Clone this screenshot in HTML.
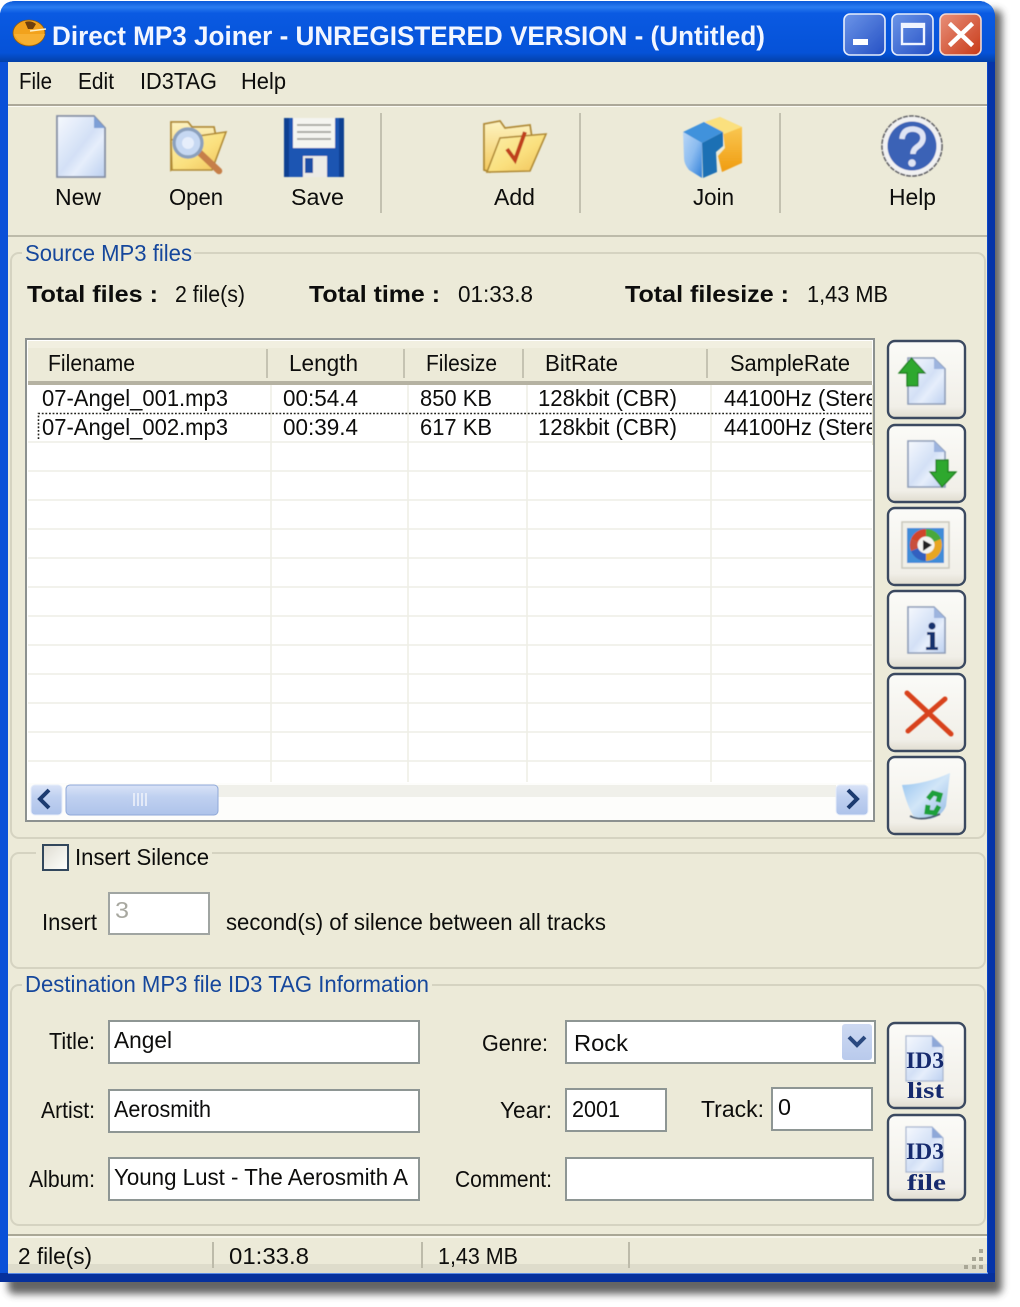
<!DOCTYPE html>
<html><head><meta charset="utf-8"><title>Direct MP3 Joiner</title>
<style>
html,body{margin:0;padding:0;background:#fff;width:1020px;height:1307px;overflow:hidden}
svg{display:block}
text{font-family:"Liberation Sans",sans-serif;font-size:23px;fill:#0c0c08;transform:translateY(-1px)}
.b{font-weight:bold}
.l{fill:#14479c}
</style></head><body>
<svg width="1020" height="1307" viewBox="0 0 1020 1307" xmlns="http://www.w3.org/2000/svg">
<defs>
<filter id="sh" x="-5%" y="-5%" width="110%" height="110%"><feGaussianBlur stdDeviation="4"/></filter>
<filter id="bl" x="-2%" y="-2%" width="104%" height="104%"><feGaussianBlur stdDeviation="0.38"/></filter>
<filter id="bi" x="-10%" y="-10%" width="120%" height="120%"><feGaussianBlur stdDeviation="0.65"/></filter>
<linearGradient id="tb" x1="0" y1="0" x2="0" y2="1"><stop offset="0" stop-color="#0a58d8"/><stop offset=".1" stop-color="#2a7cf0"/><stop offset=".2" stop-color="#0a5ae2"/><stop offset=".85" stop-color="#0552d8"/><stop offset="1" stop-color="#0340a8"/></linearGradient>
<linearGradient id="doc" x1="0" y1="0" x2="1" y2="1"><stop offset="0" stop-color="#f6f9fe"/><stop offset=".5" stop-color="#d3e0f6"/><stop offset=".65" stop-color="#e6eefb"/><stop offset="1" stop-color="#bcd0f0"/></linearGradient>
<linearGradient id="fold" x1="0" y1="0" x2="1" y2="1"><stop offset="0" stop-color="#fbeeaa"/><stop offset=".55" stop-color="#fae07e"/><stop offset="1" stop-color="#f0c058"/></linearGradient>
<linearGradient id="fold2" x1="0" y1="0" x2="0" y2="1"><stop offset="0" stop-color="#fdf3c0"/><stop offset="1" stop-color="#f3c85c"/></linearGradient>
<linearGradient id="btn" x1="0" y1="0" x2="0" y2="1"><stop offset="0" stop-color="#fbfbf8"/><stop offset=".85" stop-color="#f1efe8"/><stop offset="1" stop-color="#e0dccf"/></linearGradient>
<linearGradient id="sb" x1="0" y1="0" x2="0" y2="1"><stop offset="0" stop-color="#d9e3f7"/><stop offset=".4" stop-color="#bfd0f0"/><stop offset="1" stop-color="#aec3ea"/></linearGradient>
<linearGradient id="cb" x1="0" y1="0" x2="0" y2="1"><stop offset="0" stop-color="#cdd9f2"/><stop offset="1" stop-color="#b9caec"/></linearGradient>
<linearGradient id="wb" x1="0" y1="0" x2="1" y2="1"><stop offset="0" stop-color="#6c95e8"/><stop offset="1" stop-color="#2450c4"/></linearGradient>
<linearGradient id="wr" x1="0" y1="0" x2="1" y2="1"><stop offset="0" stop-color="#e8907a"/><stop offset="1" stop-color="#c83a18"/></linearGradient>
<linearGradient id="j1" x1="0" y1="0" x2="1" y2="1"><stop offset="0" stop-color="#b8d6f6"/><stop offset=".5" stop-color="#8cbcf0"/><stop offset="1" stop-color="#2f7fd8"/></linearGradient>
<linearGradient id="j2" x1="0" y1="0" x2="0" y2="1"><stop offset="0" stop-color="#fbd060"/><stop offset="1" stop-color="#f09c10"/></linearGradient>
<linearGradient id="ck" x1="0" y1="0" x2="1" y2="1"><stop offset="0" stop-color="#dedcd2"/><stop offset=".7" stop-color="#f6f6f0"/><stop offset="1" stop-color="#fff"/></linearGradient>
<linearGradient id="rc" x1="0" y1="0" x2="1" y2="1"><stop offset="0" stop-color="#8fc0ee"/><stop offset=".5" stop-color="#d2e6f8"/><stop offset="1" stop-color="#8fb8e4"/></linearGradient>
<g id="d"><path d="M0 0H26L37 11V46H0Z" fill="url(#doc)" stroke="#8f9db8" stroke-width="1.6"/><path d="M26 0L37 11H26Z" fill="#9db4de"/></g>
</defs>

<!-- shadow -->
<rect x="8" y="10" width="994" height="1284" rx="6" fill="#4a4a48" opacity=".85" filter="url(#sh)"/>

<!-- window frame -->
<path d="M0 14Q2 1 16 1H980Q994 3 995 16V1282H0Z" fill="#0a46c8"/>
<path d="M0 14Q2 1 16 1H980Q994 3 995 16V62H0Z" fill="url(#tb)"/>
<rect x="988" y="62" width="7" height="1220" fill="#0634a8"/>
<rect x="0" y="62" width="8" height="1220" fill="#0a50d8"/>
<rect x="0" y="1273" width="995" height="9" fill="#06309c"/>
<rect x="8" y="1272" width="980" height="2" fill="#5a8ae6"/>

<!-- client -->
<rect x="8" y="62" width="979" height="1211" fill="#ecead8"/>

<g filter="url(#bl)">
<!-- app icon -->
<ellipse cx="29" cy="33" rx="16" ry="13" fill="#f2a21c" stroke="#8a5a14" stroke-width=".8"/>
<path d="M14 34Q20 45 30 45Q42 44 45 34Z" fill="#f7b030"/>
<path d="M25 22Q31 20 36 24L33 29H28Z" fill="#6e3f0c"/>
<path d="M30 31L46 29" stroke="#fff0c8" stroke-width="1.4"/>
<text class="b" x="52" y="46" font-size="27" style="font-size:27px;fill:#f2f6ff" textLength="713" lengthAdjust="spacingAndGlyphs">Direct MP3 Joiner - UNREGISTERED VERSION - (Untitled)</text>

<!-- caption buttons -->
<rect x="844" y="14" width="41" height="41" rx="6" fill="url(#wb)" stroke="#e6eefc" stroke-width="1.6"/>
<rect x="853" y="39" width="15" height="6" fill="#fff"/>
<rect x="892" y="14" width="41" height="41" rx="6" fill="url(#wb)" stroke="#e6eefc" stroke-width="1.6"/>
<rect x="902" y="24" width="22" height="20" fill="none" stroke="#f0f4ff" stroke-width="2.4"/><rect x="902" y="24" width="22" height="4" fill="#f0f4ff"/>
<rect x="940" y="14" width="41" height="41" rx="6" fill="url(#wr)" stroke="#f2d8d0" stroke-width="1.6"/>
<path d="M951 25L971 44M971 25L951 44" stroke="#fff" stroke-width="4.4" stroke-linecap="square"/>

<!-- menu -->
<text x="19" y="90" textLength="33" lengthAdjust="spacingAndGlyphs">File</text>
<text x="78" y="90" textLength="36" lengthAdjust="spacingAndGlyphs">Edit</text>
<text x="140" y="90" textLength="77" lengthAdjust="spacingAndGlyphs">ID3TAG</text>
<text x="241" y="90" textLength="45" lengthAdjust="spacingAndGlyphs">Help</text>
<rect x="8" y="104" width="979" height="2" fill="#aca899"/><rect x="8" y="106" width="979" height="1" fill="#fbfaf3"/>

<!-- toolbar icons -->
<g filter="url(#bi)">
<!-- New -->
<path d="M57 116H94L105 128V177H57Z" fill="url(#doc)" stroke="#858fa4" stroke-width="1.8"/>
<path d="M94 116L105 128H94Z" fill="#7d9fd6"/>

<!-- Open -->
<path d="M171 122H188L192 127H214L216 137L171 170Z" fill="url(#fold2)" stroke="#b08a34" stroke-width="1.8"/>
<path d="M172 170L171 140L226 132L212 170Z" fill="url(#fold)" stroke="#b08a34" stroke-width="1.6"/>
<path d="M200 153L219 171" stroke="#c67f48" stroke-width="6.5" stroke-linecap="round"/>
<circle cx="188" cy="143" r="14" fill="#c6d8f2" stroke="#8ba0bc" stroke-width="3.4"/>
<circle cx="188" cy="143" r="6" fill="#e6eefb"/>

<!-- Save -->
<rect x="284" y="118" width="60" height="59" rx="3" fill="#1a54b2"/>
<rect x="284" y="118" width="5" height="59" fill="#0f3f92"/><rect x="339" y="118" width="5" height="59" fill="#0f3f92"/>
<rect x="293" y="118" width="42" height="30" fill="#f4f4f0"/>
<path d="M297 125H331M297 132H331M297 139H331" stroke="#a2a29c" stroke-width="1.8"/>
<rect x="303" y="156" width="24" height="21" fill="#ecebe6"/><rect x="305" y="158" width="8" height="15" fill="#1c4ea6"/>

<!-- Add -->
<path d="M484 124L500 121L505 128L530 125L532 138L490 172L484 170Z" fill="url(#fold2)" stroke="#b08a34" stroke-width="1.8"/>
<path d="M487 172L500 138L546 134L530 171Z" fill="url(#fold)" stroke="#b08a34" stroke-width="1.6"/>
<path d="M507 149L515 160L525 132" fill="none" stroke="#bf3f1a" stroke-width="4"/>

<!-- Join -->
<path d="M705 122L720 117L742 127V163L722 172L718 156L725 148L723 132Z" fill="url(#j2)"/>
<path d="M705 122L720 117L742 127L724 134Z" fill="#fbe07e"/>
<path d="M683 132L704 122L723 132L702 143Z" fill="#3f92dc"/>
<path d="M702 143L723 132V146L716 152L717 172L703 178Z" fill="#1a6fb4"/>
<path d="M683 132L702 143V178L689 170Q684 164 684 158Z" fill="url(#j1)"/>

<!-- Help -->
<circle cx="912" cy="146" r="30" fill="#f1f1f2" stroke="#5c5c62" stroke-width="1.6" stroke-dasharray="5 1"/>
<circle cx="912" cy="146" r="24.500" fill="#3a62b6"/>
<path d="M902 139Q903 129 913 129Q923 130 923 138Q923 143 917 147Q913 150 913 154" fill="none" stroke="#dfe4f4" stroke-width="5.5"/>
<circle cx="912" cy="163" r="3.8" fill="#dfe4f4"/>
</g>

<path d="M381 113V213M580 113V213M780 113V213" stroke="#c3c1b0" stroke-width="2"/>
<text x="55" y="206" textLength="46" lengthAdjust="spacingAndGlyphs">New</text>
<text x="169" y="206" textLength="54" lengthAdjust="spacingAndGlyphs">Open</text>
<text x="291" y="206" textLength="53" lengthAdjust="spacingAndGlyphs">Save</text>
<text x="494" y="206" textLength="41" lengthAdjust="spacingAndGlyphs">Add</text>
<text x="693" y="206" textLength="41" lengthAdjust="spacingAndGlyphs">Join</text>
<text x="889" y="206" textLength="47" lengthAdjust="spacingAndGlyphs">Help</text>
<rect x="8" y="235" width="979" height="2" fill="#bdbbaa"/>

<!-- groups -->
<rect x="11" y="253" width="974" height="585" rx="8" fill="none" stroke="#d5d3c1" stroke-width="2"/>
<rect x="22" y="245" width="172" height="18" fill="#ecead8"/>
<text class="l" x="25" y="262" textLength="167" lengthAdjust="spacingAndGlyphs">Source MP3 files</text>
<rect x="11" y="853" width="974" height="115" rx="8" fill="none" stroke="#d5d3c1" stroke-width="2"/>
<rect x="36" y="845" width="176" height="18" fill="#ecead8"/>
<rect x="11" y="985" width="974" height="240" rx="8" fill="none" stroke="#d5d3c1" stroke-width="2"/>
<rect x="22" y="975" width="410" height="18" fill="#ecead8"/>
<text class="l" x="25" y="993" textLength="404" lengthAdjust="spacingAndGlyphs">Destination MP3 file ID3 TAG Information</text>

<!-- totals -->
<text class="b" x="27" y="303" textLength="131" lengthAdjust="spacingAndGlyphs">Total files :</text>
<text x="175" y="303" textLength="70" lengthAdjust="spacingAndGlyphs">2 file(s)</text>
<text class="b" x="309" y="303" textLength="131" lengthAdjust="spacingAndGlyphs">Total time :</text>
<text x="458" y="303" textLength="75" lengthAdjust="spacingAndGlyphs">01:33.8</text>
<text class="b" x="625" y="303" textLength="164" lengthAdjust="spacingAndGlyphs">Total filesize :</text>
<text x="807" y="303" textLength="81" lengthAdjust="spacingAndGlyphs">1,43 MB</text>

<!-- table -->
<rect x="26" y="339" width="848" height="482" fill="#fff" stroke="#8c9190" stroke-width="2"/>
<rect x="28" y="341" width="844" height="41" fill="#ecead8"/>
<rect x="28" y="341" width="844" height="7" fill="#f1efe0"/>
<rect x="28" y="381" width="844" height="4" fill="#b5b2a2"/>
<path d="M267 349V378M404 349V378M523 349V378M707 349V378" stroke="#c5c3b2" stroke-width="2"/>
<path d="M28 471H872M28 500H872M28 529H872M28 558H872M28 587H872M28 616H872M28 645H872M28 674H872M28 703H872M28 732H872M28 761H872M28 442H872" stroke="#eeeee6" stroke-width="1.6"/>
<path d="M271 385V782M408 385V782M527 385V782M711 385V782" stroke="#eeeee6" stroke-width="1.6"/>
<path d="M38.500 439V413.500H872" fill="none" stroke="#22221e" stroke-width="1.6" stroke-dasharray="1.8 1.8"/>

<text x="48" y="372" textLength="87" lengthAdjust="spacingAndGlyphs">Filename</text>
<text x="289" y="372" textLength="69" lengthAdjust="spacingAndGlyphs">Length</text>
<text x="426" y="372" textLength="71" lengthAdjust="spacingAndGlyphs">Filesize</text>
<text x="545" y="372" textLength="73" lengthAdjust="spacingAndGlyphs">BitRate</text>
<text x="730" y="372" textLength="120" lengthAdjust="spacingAndGlyphs">SampleRate</text>

<text x="42" y="407" textLength="186" lengthAdjust="spacingAndGlyphs">07-Angel_001.mp3</text>
<text x="283" y="407" textLength="75" lengthAdjust="spacingAndGlyphs">00:54.4</text>
<text x="420" y="407" textLength="72" lengthAdjust="spacingAndGlyphs">850 KB</text>
<text x="538" y="407" textLength="139" lengthAdjust="spacingAndGlyphs">128kbit (CBR)</text>
<text x="724" y="407" textLength="166" lengthAdjust="spacingAndGlyphs">44100Hz (Stereo</text>
<text x="42" y="436" textLength="186" lengthAdjust="spacingAndGlyphs">07-Angel_002.mp3</text>
<text x="283" y="436" textLength="75" lengthAdjust="spacingAndGlyphs">00:39.4</text>
<text x="420" y="436" textLength="72" lengthAdjust="spacingAndGlyphs">617 KB</text>
<text x="538" y="436" textLength="139" lengthAdjust="spacingAndGlyphs">128kbit (CBR)</text>
<text x="724" y="436" textLength="166" lengthAdjust="spacingAndGlyphs">44100Hz (Stereo</text>
<rect x="872" y="385" width="18" height="60" fill="#ecead8"/>
<rect x="873" y="340" width="2" height="482" fill="#8c9190"/>

<!-- scrollbar -->
<rect x="28" y="783" width="844" height="37" fill="#fdfdfb"/>
<rect x="66" y="785" width="770" height="12" fill="#f0f0ea"/>
<rect x="31" y="785" width="31" height="30" rx="4" fill="url(#sb)" stroke="#e6edfa"/>
<rect x="66" y="785" width="152" height="30" rx="4" fill="url(#sb)" stroke="#8fa8d8"/>
<rect x="836" y="785" width="32" height="30" rx="4" fill="url(#sb)" stroke="#e6edfa"/>
<path d="M49 790L40 799L49 808" fill="none" stroke="#1e3a70" stroke-width="4"/>
<path d="M848 790L857 799L848 808" fill="none" stroke="#1e3a70" stroke-width="4"/>
<path d="M134 793V806M138 793V806M142 793V806M146 793V806" stroke="#eef2fb" stroke-width="1.6"/>

<!-- side buttons -->
<g fill="url(#btn)" stroke="#3a4a60" stroke-width="2.4">
<rect x="888" y="341" width="77" height="77" rx="7"/>
<rect x="888" y="425" width="77" height="77" rx="7"/>
<rect x="888" y="508" width="77" height="77" rx="7"/>
<rect x="888" y="591" width="77" height="77" rx="7"/>
<rect x="888" y="674" width="77" height="77" rx="7"/>
<rect x="888" y="757" width="77" height="77" rx="7"/>
<rect x="888" y="1023" width="77" height="85" rx="7"/>
<rect x="888" y="1115" width="77" height="85" rx="7"/>
</g>
<g filter="url(#bi)">
<use href="#d" x="908" y="358"/>
<path d="M911.500 358L925 373H918V386H907V373H899Z" fill="#2fa82f" stroke="#1b7a1b" stroke-width="1.2"/>
<use href="#d" x="908" y="441"/>
<path d="M942 487L956 472H948V460H936V472H930Z" fill="#2fa82f" stroke="#1b7a1b" stroke-width="1.2"/>
<rect x="902" y="522" width="47" height="46" fill="#f0efe8" stroke="#c9c7bc" stroke-width="1.5"/>
<rect x="907" y="528" width="37" height="35" fill="#3f8cd8"/>
<circle cx="926" cy="545" r="16" fill="#e8a624"/>
<path d="M926 529A16 16 0 0 1 941 539L926 545Z" fill="#4aa83a"/>
<path d="M911 539A16 16 0 0 1 926 529L926 545Z" fill="#d0442c"/>
<path d="M911 551A16 16 0 0 1 911 539L926 545Z" fill="#c8503c"/>
<path d="M911 551A16 16 0 0 0 926 561L926 545Z" fill="#3060c0"/>
<circle cx="926" cy="545" r="8.500" fill="#f4f4f0"/>
<path d="M923 540L932 545L923 551Z" fill="#222"/>
<use href="#d" x="908" y="607"/>
<circle cx="932" cy="626" r="3.6" fill="#15316e"/>
<path d="M927 632H935V647H938V650H926V647H930V635H927Z" fill="#15316e"/>
<path d="M907 693L951 734M945 699L908 731" stroke="#d8431c" stroke-width="5" stroke-linecap="round"/>
<path d="M902 785Q926 784 950 773L946 806Q942 816 930 819L914 817Q907 806 902 785Z" fill="url(#rc)"/>
<path d="M910 816Q922 822 940 814" fill="none" stroke="#4a5a70" stroke-width="1.8"/>
<path d="M928 799L933 793L940 795L938 802M939 806L935 813L927 812L928 805" fill="none" stroke="#1da03a" stroke-width="5"/>

<path d="M906 1036H932L943 1047V1081H906Z" fill="url(#doc)" stroke="#a9b6cf" stroke-width="1.2"/><path d="M932 1036L943 1047H932Z" fill="#8ea8d8"/>
<path d="M906 1127H932L943 1138V1172H906Z" fill="url(#doc)" stroke="#a9b6cf" stroke-width="1.2"/><path d="M932 1127L943 1138H932Z" fill="#8ea8d8"/>
</g>
<text class="b" x="906" y="1069" style="font-family:'Liberation Serif',serif;font-size:23px;fill:#12296e" textLength="38" lengthAdjust="spacingAndGlyphs">ID3</text>
<text class="b" x="907" y="1099" style="font-family:'Liberation Serif',serif;font-size:23px;fill:#12296e" textLength="37" lengthAdjust="spacingAndGlyphs">list</text>
<text class="b" x="906" y="1160" style="font-family:'Liberation Serif',serif;font-size:23px;fill:#12296e" textLength="38" lengthAdjust="spacingAndGlyphs">ID3</text>
<text class="b" x="907" y="1191" style="font-family:'Liberation Serif',serif;font-size:23px;fill:#12296e" textLength="39" lengthAdjust="spacingAndGlyphs">file</text>

<!-- insert silence -->
<rect x="43" y="845" width="25" height="25" fill="url(#ck)" stroke="#33465c" stroke-width="2"/>
<text x="75" y="866" textLength="134" lengthAdjust="spacingAndGlyphs">Insert Silence</text>
<text x="42" y="931" textLength="55" lengthAdjust="spacingAndGlyphs">Insert</text>
<rect x="109" y="893" width="100" height="41" fill="#fff" stroke="#a0a5a2" stroke-width="2"/>
<text x="115" y="919" style="fill:#a8a8a0" textLength="14" lengthAdjust="spacingAndGlyphs">3</text>
<text x="226" y="931" textLength="380" lengthAdjust="spacingAndGlyphs">second(s) of silence between all tracks</text>

<!-- ID3 form -->
<g fill="#fff" stroke="#8e9694" stroke-width="2">
<rect x="109" y="1021" width="310" height="42"/>
<rect x="109" y="1090" width="310" height="42"/>
<rect x="109" y="1158" width="310" height="42"/>
<rect x="566" y="1021" width="309" height="42"/>
<rect x="566" y="1089" width="100" height="42"/>
<rect x="772" y="1088" width="100" height="42"/>
<rect x="566" y="1158" width="307" height="42"/>
</g>
<rect x="842" y="1024" width="30" height="36" rx="3" fill="url(#cb)"/>
<path d="M849 1037L857 1045L865 1037" fill="none" stroke="#2b4a80" stroke-width="4"/>

<text x="49" y="1050" textLength="46" lengthAdjust="spacingAndGlyphs">Title:</text>
<text x="114" y="1049" textLength="58" lengthAdjust="spacingAndGlyphs">Angel</text>
<text x="41" y="1119" textLength="54" lengthAdjust="spacingAndGlyphs">Artist:</text>
<text x="114" y="1118" textLength="97" lengthAdjust="spacingAndGlyphs">Aerosmith</text>
<text x="29" y="1188" textLength="66" lengthAdjust="spacingAndGlyphs">Album:</text>
<text x="114" y="1186" textLength="294" lengthAdjust="spacingAndGlyphs">Young Lust - The Aerosmith A</text>
<text x="482" y="1052" textLength="66" lengthAdjust="spacingAndGlyphs">Genre:</text>
<text x="574" y="1052" textLength="54" lengthAdjust="spacingAndGlyphs">Rock</text>
<text x="500" y="1119" textLength="52" lengthAdjust="spacingAndGlyphs">Year:</text>
<text x="572" y="1118" textLength="48" lengthAdjust="spacingAndGlyphs">2001</text>
<text x="701" y="1118" textLength="63" lengthAdjust="spacingAndGlyphs">Track:</text>
<text x="778" y="1116" textLength="13" lengthAdjust="spacingAndGlyphs">0</text>
<text x="455" y="1188" textLength="97" lengthAdjust="spacingAndGlyphs">Comment:</text>

<!-- status bar -->
<rect x="8" y="1234" width="979" height="2" fill="#a9a796"/>
<rect x="8" y="1236" width="979" height="2" fill="#f6f5ea"/>
<rect x="8" y="1264" width="979" height="9" fill="#dedccb"/>
<path d="M213 1242V1268M422 1242V1268M629 1242V1268" stroke="#bdbbaa" stroke-width="2"/>
<text x="18" y="1265" textLength="74" lengthAdjust="spacingAndGlyphs">2 file(s)</text>
<text x="229" y="1265" textLength="80" lengthAdjust="spacingAndGlyphs">01:33.8</text>
<text x="438" y="1265" textLength="80" lengthAdjust="spacingAndGlyphs">1,43 MB</text>
<g fill="#a9a796"><rect x="979" y="1249" width="4" height="4"/><rect x="972" y="1257" width="4" height="4"/><rect x="979" y="1257" width="4" height="4"/><rect x="964" y="1265" width="4" height="4"/><rect x="972" y="1265" width="4" height="4"/><rect x="979" y="1265" width="4" height="4"/></g>
</g>
</svg>
</body></html>
